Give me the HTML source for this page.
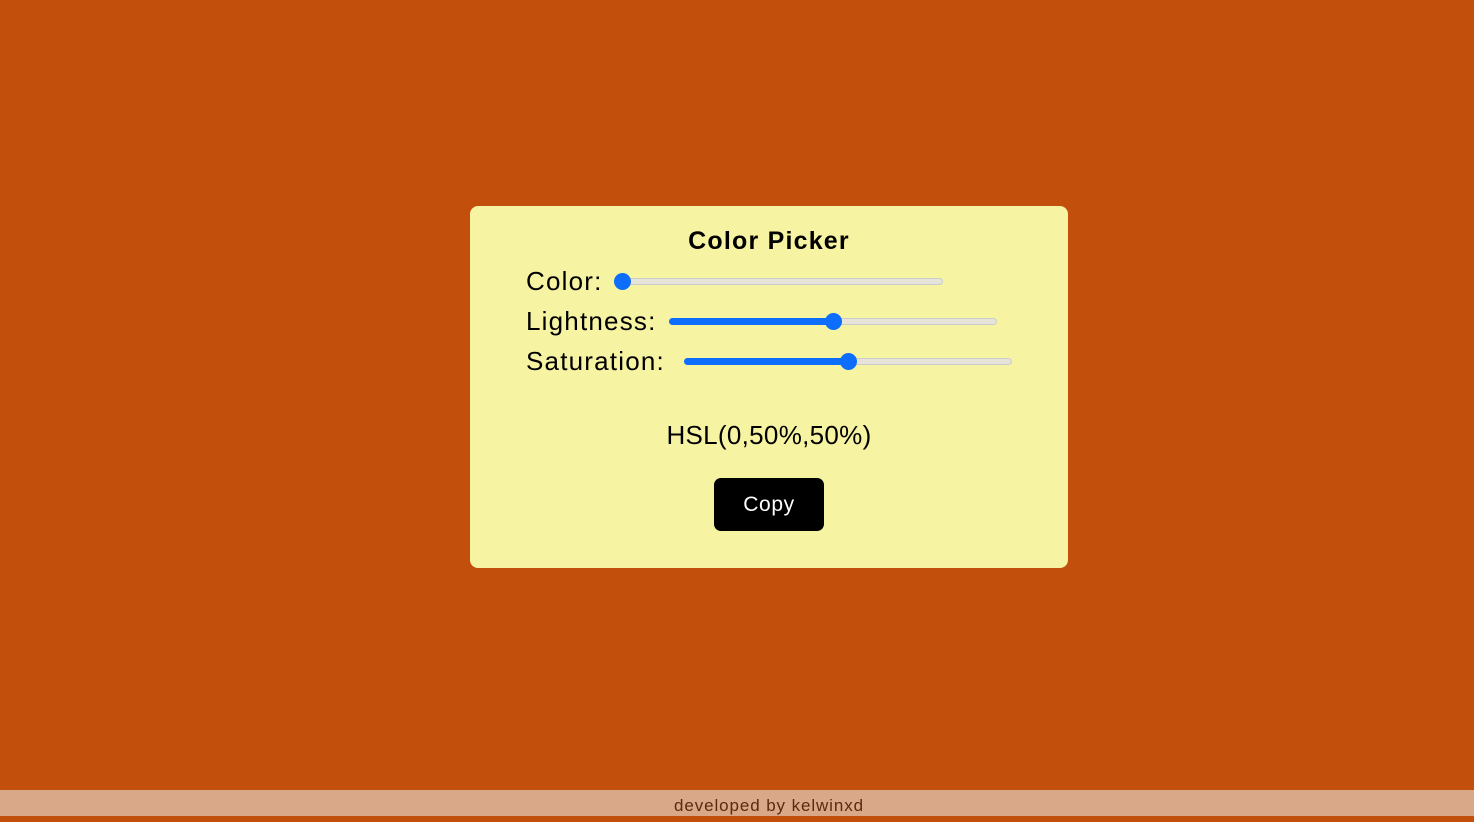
<!DOCTYPE html>
<html><head><style>
html,body{margin:0;padding:0;width:1474px;height:816px;overflow:hidden;background:#c24f0b;font-family:"Liberation Sans",sans-serif}
.card{position:absolute;left:470px;top:206px;width:598px;height:362px;background:#f6f3a2;border-radius:8px}
.t{position:absolute;left:0;width:598px;text-align:center;top:21px;font-weight:bold;font-size:25px;color:#000;letter-spacing:1.2px}
.lab{position:absolute;left:56px;font-size:26px;color:#000;line-height:30px;letter-spacing:1.2px}
.tr{position:absolute;height:7px;border-radius:4px;background:#e6e3d8;border:1px solid #ccc;box-sizing:border-box}
.fill{position:absolute;height:7px;border-radius:4px;background:#0d6efd}
.th{position:absolute;width:17px;height:17px;border-radius:50%;background:#0d6efd}
.hsl{position:absolute;left:0;width:598px;text-align:center;top:214px;font-size:26px;color:#000;letter-spacing:0.3px}
.btn{position:absolute;left:244px;top:272px;width:110px;height:53px;background:#000;border-radius:7px;color:#fff;font-size:21px;text-align:center;line-height:53px;letter-spacing:0.6px}
.foot{position:absolute;left:0;top:790px;width:1474px;height:26px;background:#d9a889}
.ft{position:absolute;left:568px;width:402px;text-align:center;top:0;font-size:17px;color:#5a2a10;line-height:32px;letter-spacing:0.9px}
</style></head><body>
<div class="card">
<div class="t">Color Picker</div>
<div class="lab" style="top:60px">Color:</div>
<div class="tr" style="left:152px;top:72px;width:321px"></div>
<div class="th" style="left:144px;top:67px"></div>
<div class="lab" style="top:100px">Lightness:</div>
<div class="tr" style="left:199px;top:112px;width:328px"></div>
<div class="fill" style="left:199px;top:112px;width:164px"></div>
<div class="th" style="left:355px;top:107px"></div>
<div class="lab" style="top:140px">Saturation:</div>
<div class="tr" style="left:214px;top:152px;width:328px"></div>
<div class="fill" style="left:214px;top:152px;width:164px"></div>
<div class="th" style="left:370px;top:147px"></div>
<div class="hsl">HSL(0,50%,50%)</div>
<div class="btn">Copy</div>
</div>
<div class="foot"><div class="ft">developed by kelwinxd</div></div>
</body></html>
